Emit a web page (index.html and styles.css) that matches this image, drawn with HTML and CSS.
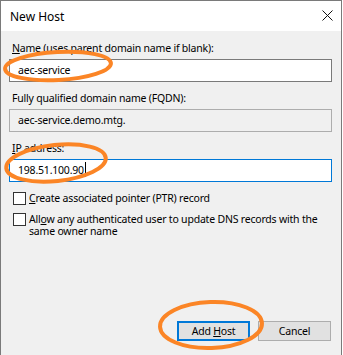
FILE: index.html
```html
<!DOCTYPE html>
<html lang="en">
<head>
    <meta charset="UTF-8">
    <meta name="viewport" content="width=device-width, initial-scale=1.0">
    <title>New Host</title>
    <link rel="stylesheet" href="styles.css">
</head>
<body>
    <div class="window">
        <div class="titlebar">
            <span class="title">New Host</span>
            <svg class="close" width="11" height="11" viewBox="0 0 11 11">
                <path d="M0.5 0.5 L10.5 10.5 M10.5 0.5 L0.5 10.5" stroke="#111" stroke-width="1" fill="none"/>
            </svg>
        </div>
        <div class="content">
            <div class="field">
                <label class="label"><u>N</u>ame (uses parent domain name if blank):</label>
                <div class="input">aec-service</div>
            </div>
            <div class="field">
                <label class="label">Fully qualified domain name (FQDN):</label>
                <div class="input readonly">aec-service.demo.mtg.</div>
            </div>
            <div class="field">
                <label class="label"><u>I</u>P address:</label>
                <div class="input focused">198.51.100.90<span class="caret"></span></div>
            </div>
            <div class="check first">
                <span class="box"></span>
                <span class="check-text"><u>C</u>reate associated pointer (PTR) record</span>
            </div>
            <div class="check">
                <span class="box"></span>
                <span class="check-text">All<u>o</u>w any authenticated user to update DNS records with the same owner name</span>
            </div>
            <div class="actions">
                <button class="btn default">Add <u>H</u>ost</button>
                <button class="btn">Cancel</button>
            </div>
        </div>
    </div>

    <!-- hand-drawn highlight marks -->
    <svg class="marks" width="343" height="355" viewBox="0 0 343 355">
        <ellipse cx="58" cy="66" rx="53" ry="14" transform="rotate(-3 58 66)"/>
        <ellipse cx="56" cy="163" rx="50" ry="18" transform="rotate(-6 56 163)"/>
        <ellipse cx="211" cy="325" rx="51" ry="23" transform="rotate(-2 211 325)"/>
    </svg>
</body>
</html>
```

FILE: styles.css
```css
* {
    box-sizing: border-box;
    margin: 0;
    padding: 0;
}

body {
    font-family: "Noto Sans", "Open Sans", sans-serif;
    font-size: 10.5px;
    letter-spacing: -0.2px;
    color: #000;
    background: #ffffff;
    width: 343px;
    height: 355px;
    overflow: hidden;
}

.window {
    width: 342px;
    height: 355px;
    display: flex;
    flex-direction: column;
    border: 1px solid #7a7a7a;
    border-bottom: none;
}

.titlebar {
    height: 30px;
    background: #ffffff;
    display: flex;
    align-items: center;
    justify-content: space-between;
    padding: 0 8px 0 9px;
}

.title {
    font-size: 12px;
    letter-spacing: 0;
    line-height: 15px;
}

.close {
    margin-top: -1px;
}

.content {
    flex: 1;
    background: #f0f0f0;
    display: flex;
    flex-direction: column;
    padding: 10px 9px 14px 8px;
}

.field + .field {
    margin-top: 9px;
}

.label {
    display: block;
    padding-left: 3px;
    line-height: 15px;
    margin-bottom: 3px;
}

.input {
    height: 23px;
    width: 100%;
    border: 1px solid #7a7a7a;
    background: #ffffff;
    padding-left: 8px;
    line-height: 20px;
    white-space: nowrap;
}

.input.readonly {
    background: #f0f0f0;
    border-color: #adadad;
}

.input.focused {
    border-color: #0078d7;
}

.caret {
    display: inline-block;
    width: 1px;
    height: 15px;
    background: #000;
    vertical-align: -3px;
    margin-left: 1px;
}

.check {
    display: flex;
    align-items: flex-start;
    gap: 3px;
    padding-left: 4px;
    margin-top: 8px;
}

.check.first {
    margin-top: 10px;
}

.box {
    flex: none;
    width: 13px;
    height: 13px;
    border: 1px solid #333333;
    background: #ffffff;
}

.check-text {
    line-height: 12px;
}

.actions {
    margin-top: auto;
    display: flex;
    justify-content: flex-end;
    gap: 8px;
    margin-right: 1px;
}

.btn {
    width: 73px;
    height: 20px;
    font-family: inherit;
    font-size: 10.5px;
    letter-spacing: -0.2px;
    color: #000;
    background: #e1e1e1;
    border: 1px solid #adadad;
    line-height: 16px;
}

.btn.default {
    border: 2px solid #0078d7;
}

.marks {
    position: absolute;
    top: 0;
    left: 0;
    pointer-events: none;
}

.marks ellipse {
    fill: none;
    stroke: #fb8526;
    stroke-width: 4;
}
```
